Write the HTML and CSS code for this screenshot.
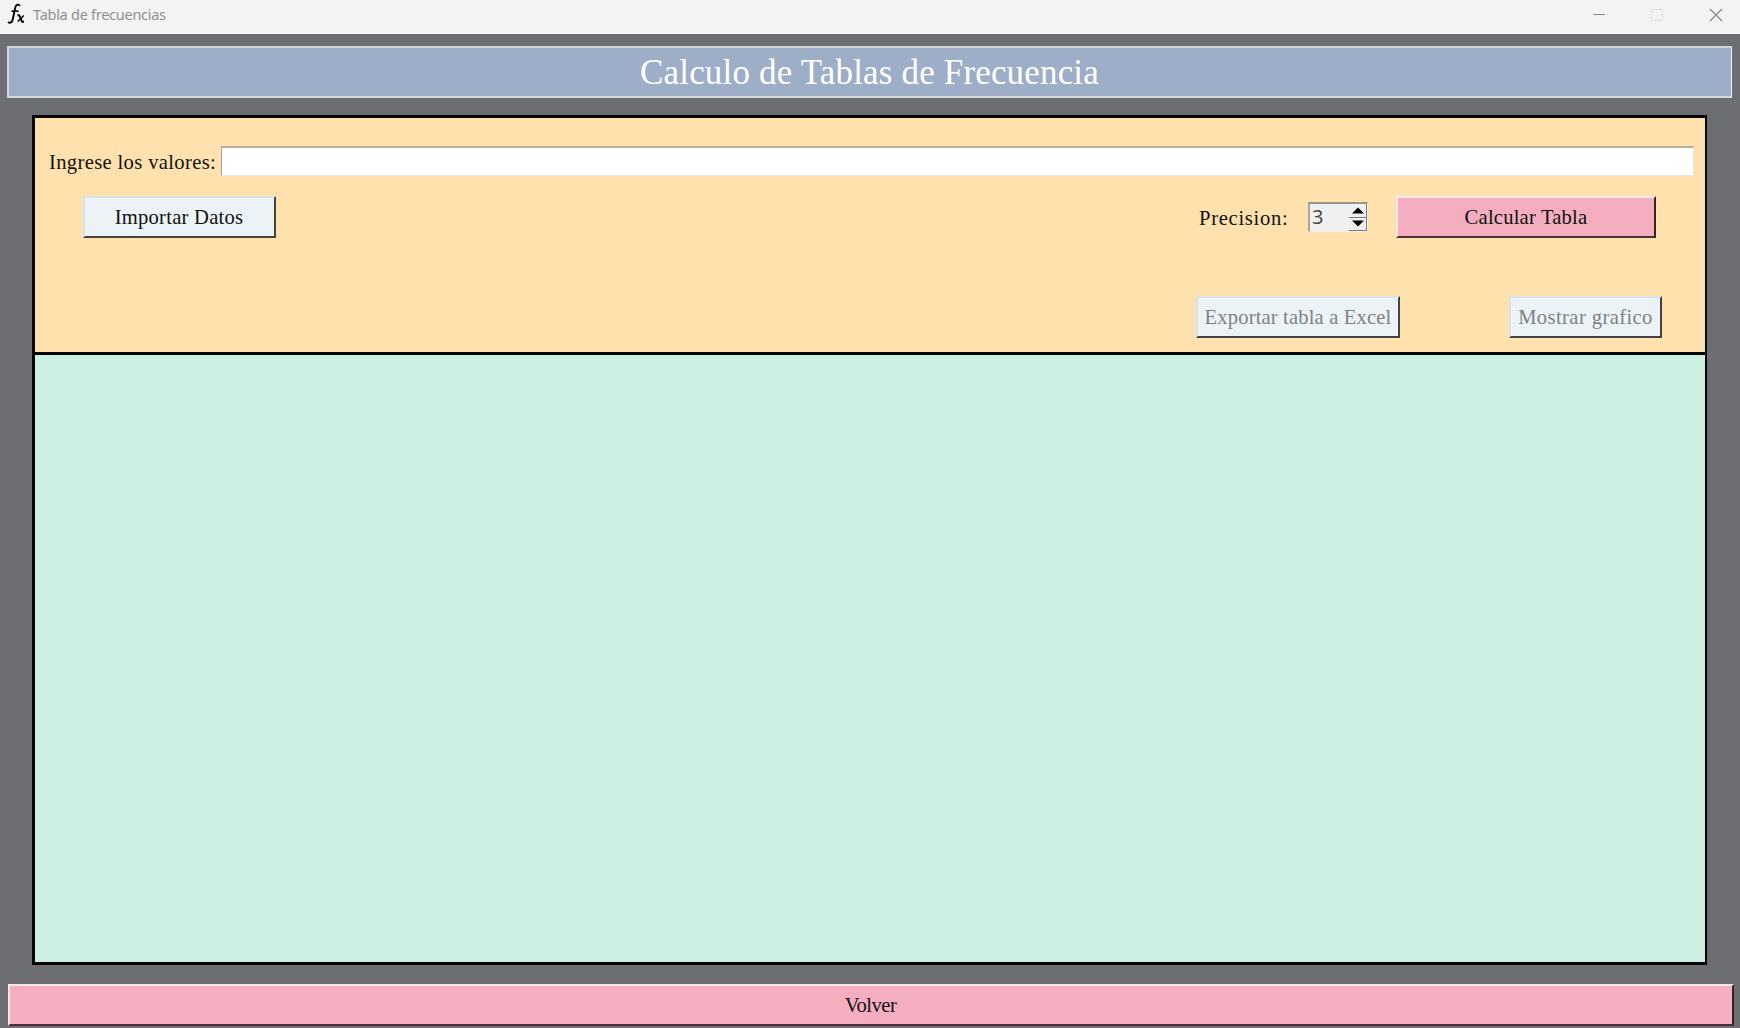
FILE: index.html
```html
<!DOCTYPE html>
<html lang="es">
<head>
<meta charset="utf-8">
<title>Tabla de frecuencias</title>
<link rel="stylesheet" href="styles.css">
</head>
<body>
<header class="titlebar">
  <svg class="app-icon" width="18" height="22" viewBox="0 0 18 22" fill="none" stroke="#000">
    <path d="M13 3C11.5 .8 9 1.4 8.3 4.4L5.7 16.5C5.2 19.3 3 20.8 1.2 19" stroke-width="1.9"/>
    <path d="M4.5 8.2H11.5" stroke-width="1.6"/>
    <path d="M10.5 12.2H12.1L15.2 18.7H17" stroke-width="1.9"/>
    <path d="M16.8 12.5L10.8 18.5" stroke-width="1.5"/>
  </svg>
  <span class="window-title">Tabla de frecuencias</span>
  <svg class="controls" width="132" height="16" viewBox="0 0 132 16" fill="none">
    <path d="M1 6.5H13" stroke="#8d8d8d"/>
    <rect x="59.5" y="1.5" width="11" height="11" rx="1" stroke="#dedede"/>
    <path d="M118 1L130 13M130 1L118 13" stroke="#858585" stroke-width="1.2"/>
  </svg>
</header>
<main class="window">
  <h1 class="heading"><span>Calculo de Tablas de Frecuencia</span></h1>
  <section class="panel">
    <div class="form">
      <div class="row values">
        <label class="values-label" for="values">Ingrese los valores:</label>
        <input class="entry" id="values" type="text">
      </div>
      <div class="row actions">
        <button class="btn import">Importar Datos</button>
        <label class="precision-label">Precision:</label>
        <div class="spinbox">
          <span class="spin-value">3</span>
          <div class="arrows">
            <div class="arrow"><svg width="12" height="7" viewBox="0 0 12 7"><path d="M0 6.5L6 .5L12 6.5Z"/></svg></div>
            <div class="arrow"><svg width="12" height="7" viewBox="0 0 12 7"><path d="M0 .5L6 6.5L12 .5Z"/></svg></div>
          </div>
        </div>
        <button class="btn pink calculate">Calcular Tabla</button>
      </div>
      <div class="row outputs">
        <button class="btn export" disabled>Exportar tabla a Excel</button>
        <button class="btn chart" disabled>Mostrar grafico</button>
      </div>
    </div>
    <div class="result"></div>
  </section>
  <button class="btn pink back">Volver</button>
</main>
</body>
</html>
```
FILE: styles.css
```css
* { box-sizing: border-box; }
body {
  margin: 0;
  width: 1740px;
  height: 1028px;
  overflow: hidden;
  display: flex;
  flex-direction: column;
  background: #6d6e72;
  color: #111;
  font: 20.6px "Liberation Serif", "Times New Roman", serif;
}
.titlebar {
  height: 34px;
  flex: none;
  display: flex;
  align-items: flex-start;
  padding: 3px 16px 0 7px;
  background: #f3f3f3;
}
.window-title {
  margin: 1px 0 0 8px;
  font: 14.5px/20px "Noto Sans", sans-serif;
  letter-spacing: -0.27px;
  color: #909090;
}
.controls { margin: 5px 0 0 auto; }
.window {
  flex: 1;
  display: flex;
  flex-direction: column;
  padding: 12px 6px 3px 7px;
}
.heading {
  height: 52px;
  margin: 0 2px 0 0;
  padding: 2px 1px 0 0;
  display: flex;
  justify-content: center;
  align-items: center;
  border: 2px solid #d3d7de;
  border-top-color: #d0d2d6;
  border-right: 1px solid #f3f5f8;
  background: #9eadc8;
  color: #fff;
  font-size: 35px;
  font-weight: 400;
  line-height: 46px;
  letter-spacing: 0.17px;
}
.panel {
  height: 850px;
  margin: 17px 27px 0 25px;
  display: flex;
  flex-direction: column;
  border: 3px solid #050505;
  border-right-width: 2px;
}
.form {
  height: 237px;
  padding-top: 28px;
  background: #ffe1ad;
  border-bottom: 3px solid #050505;
}
.row { display: flex; }
.values { padding: 0 11px 0 14px; height: 50px; }
.values-label { width: 172px; line-height: 32px; white-space: nowrap; letter-spacing: 0.35px; }
.entry {
  flex: 1;
  height: 30px;
  border: 1px solid #e8e6e2;
  border-top: 2px solid #b9ad9b;
  border-left: 1px solid #a7a093;
  background: #fff;
}
.actions { height: 100px; padding-left: 48px; }
.btn {
  height: 42px;
  padding: 1px 0 0;
  border: 2px solid #424344;
  border-top-color: #d9e2e6;
  border-left-color: #d9e2e6;
  background: #ebf3f7;
  color: #111;
  font: inherit;
  white-space: nowrap;
}
.btn:disabled { color: #808183; }
.pink {
  background: #f4aec0;
  border-color: #f9e7e6 #332527 #483238 #f9e7e6;
}
.import { width: 193px; padding-right: 1px; letter-spacing: 0.25px; }
.precision-label { margin-left: 923px; width: 109px; line-height: 45px; letter-spacing: 0.7px; }
.spinbox {
  width: 60px;
  height: 30px;
  margin: 6px 1px 0 0;
  display: flex;
  border: 1px solid #f8f0e1;
  border-top: 2px solid #9a958d;
  border-left: 2px solid #aaa69e;
  background: #f0f0f0;
}
.spin-value {
  width: 39px;
  padding-left: 2px;
  font: 20px/26px "Open Sans", sans-serif;
  color: #444;
}
.arrows { flex: 1; display: flex; flex-direction: column; }
.arrow {
  flex: 1;
  display: flex;
  justify-content: center;
  align-items: center;
  padding-left: 1px;
  border-bottom: 1px solid #777;
  border-right: 1px solid #777;
}
.calculate { width: 260px; margin-left: 27px; letter-spacing: 0.2px; }
.outputs { padding-left: 1161px; }
.export { width: 204px; letter-spacing: 0.15px; }
.chart { width: 153px; margin-left: 109px; letter-spacing: 0.4px; }
.result { flex: 1; background: #cbefe3; }
.back { width: 1726px; margin: 19px 0 0 1px; padding-right: 1px; letter-spacing: -0.5px; }
```
